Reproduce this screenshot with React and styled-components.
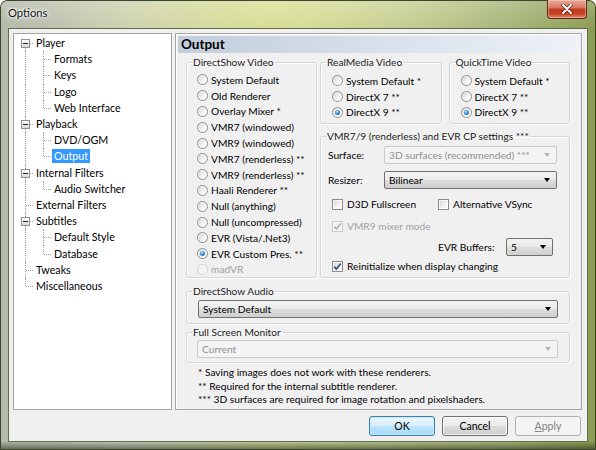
import React from 'react';
import styled, { createGlobalStyle, css } from 'styled-components';

const GlobalStyle = createGlobalStyle`
  html, body { margin: 0; padding: 0; background: #fff; }
  body {
    font-family: "Segoe UI", Lato, "Noto Sans", sans-serif;
    font-size: 10.2px;
    color: #000;
  }
  * { box-sizing: border-box; }
`;

const Window = styled.div`
  width: 596px;
  height: 450px;
  display: flex;
  flex-direction: column;
  padding: 0 8px 8px 8px;
  border-radius: 7px 7px 0 0;
  box-shadow: inset 0 0 0 1px #3b4630;
  background:
    linear-gradient(180deg, rgba(255,255,255,0.2) 0px, rgba(255,255,255,0) 28px, rgba(0,0,0,0) 441px, rgba(30,40,15,0.6) 450px),
    radial-gradient(ellipse 230px 70px at 270px 10px, rgba(222,228,150,0.85), rgba(222,228,150,0)),
    linear-gradient(90deg, #b4baa8 0%, #c6cbbb 22%, #c8cf98 45%, #bac591 65%, #a8b67a 85%, #8c9b52 100%);
`;

const TitleBar = styled.div`
  height: 28px;
  display: flex;
  align-items: flex-start;
`;

const Title = styled.span`
  margin-top: 5px;
  font-size: 11.2px;
  line-height: 16px;
  color: #111;
  text-shadow: 0 0 6px #fff, 0 0 3px #fff, 0 0 2px #fff;
`;

const CloseButton = styled.div`
  margin-left: auto;
  margin-right: 1px;
  width: 40px;
  height: 19px;
  display: flex;
  align-items: center;
  justify-content: center;
  border: 1px solid #5a2a1e;
  border-top: none;
  border-radius: 0 0 4px 4px;
  background: linear-gradient(180deg, #e9a998 0%, #d67a62 42%, #c23b1e 52%, #c94628 78%, #e0876a 100%);
  box-shadow: inset 0 0 0 1px rgba(255,220,200,0.45);
`;

const Client = styled.div`
  flex: 1;
  display: flex;
  flex-direction: column;
  gap: 6px;
  padding: 4px 5px 5px 4px;
  background: #f0f0f0;
  border: 1px solid #616e4c;
`;

const Main = styled.div`
  height: 377px;
  display: flex;
  gap: 3px;
`;

const Tree = styled.div`
  width: 159px;
  flex: none;
  background: #fff;
  border: 1px solid #a4a4a4;
  padding: 1px 0 0 2px;
  font-size: 10.7px;
`;

const TreeRow = styled.div`
  height: 16.2px;
  display: flex;
  align-items: center;
  white-space: nowrap;
`;

const Indent = styled.span`
  position: relative;
  width: 18px;
  height: 100%;
  flex: none;
  &::before {
    content: '';
    display: ${(p) => (p.$v ? 'block' : 'none')};
    position: absolute;
    left: 9px;
    top: ${(p) => (p.$first ? '50%' : '0')};
    bottom: ${(p) => (p.$last ? '50%' : '0')};
    border-left: 1px dotted #a0a0a0;
  }
  &::after {
    content: '';
    display: ${(p) => (p.$h ? 'block' : 'none')};
    position: absolute;
    left: 10px;
    right: 1px;
    top: 50%;
    border-top: 1px dotted #a0a0a0;
  }
`;

const Expander = styled.span`
  position: absolute;
  left: 5px;
  top: calc(50% - 4px);
  width: 9px;
  height: 9px;
  z-index: 1;
  border: 1px solid #919191;
  background: linear-gradient(180deg, #ffffff, #d9d9d9);
  display: flex;
  align-items: center;
  justify-content: center;
  &::after {
    content: '';
    width: 5px;
    height: 1px;
    background: #222;
  }
`;

const TreeLabel = styled.span`
  padding: 0 2px;
  line-height: 14px;
  ${(p) =>
    p.$selected &&
    css`
      background: #3399ff;
      color: #fff;
    `}
`;

const Panel = styled.div`
  flex: 1;
  display: flex;
  flex-direction: column;
  padding: 2px;
  border: 1px solid #a6a6a6;
  box-shadow: inset 1px 1px 0 #fff;
`;

const Header = styled.div`
  height: 17px;
  padding-left: 3px;
  line-height: 17px;
  font-size: 13.5px;
  font-weight: bold;
  background: linear-gradient(90deg, #c2cddc 0%, #d6dee9 45%, #eef2f7 100%);
`;

const Content = styled.div`
  display: flex;
  flex-direction: column;
  padding: 2px 9px 0 8px;
`;

const TopRow = styled.div`
  display: flex;
  gap: 3px;
`;

const RightCol = styled.div`
  width: 250px;
  display: flex;
  flex-direction: column;
  gap: 5px;
`;

const Pair = styled.div`
  display: flex;
  gap: 7px;
`;

const Group = styled.fieldset`
  margin: ${(p) => p.$mt || 0}px 0 0 0;
  padding: 0;
  min-width: 0;
  flex: ${(p) => p.$flex || 'none'};
  width: ${(p) => (p.$width ? `${p.$width}px` : 'auto')};
  border: 1px solid #d5d5d5;
  border-radius: 3px;
  box-shadow: inset 1px 1px 0 #fff, 1px 1px 0 #fff;
  display: flex;
  flex-direction: column;
`;

const Legend = styled.legend`
  margin-left: 5px;
  padding: 0 1px;
  line-height: 14px;
  white-space: nowrap;
  color: #1b1b1b;
`;

const GroupBody = styled.div`
  flex: 1;
  display: flex;
  flex-direction: column;
  padding: ${(p) => p.$pad || '3px 4px 0 10px'};
`;

const OptionRow = styled.label`
  height: ${(p) => p.$h || 15.8}px;
  width: ${(p) => (p.$w ? `${p.$w}px` : 'auto')};
  flex: none;
  display: flex;
  align-items: center;
  gap: ${(p) => p.$gap || 3}px;
  margin-left: ${(p) => p.$indent || 0}px;
  margin-top: ${(p) => p.$mt || 0}px;
  white-space: nowrap;
  color: ${(p) => (p.$disabled ? '#a0a0a0' : '#000')};
`;

const Radio = styled.span`
  width: 11px;
  height: 11px;
  flex: none;
  border-radius: 50%;
  display: grid;
  place-items: center;
  border: 1px solid ${(p) => (p.$disabled ? '#cfcfcf' : '#8c8c8c')};
  background: ${(p) =>
    p.$disabled
      ? 'linear-gradient(135deg, #ececec, #fafafa)'
      : 'linear-gradient(135deg, #cfcfcf, #f4f4f4 60%, #ffffff)'};
  box-shadow: inset 0 0 0 1px rgba(255,255,255,0.6);
  &::after {
    content: '';
    display: ${(p) => (p.$checked ? 'block' : 'none')};
    width: 5px;
    height: 5px;
    border-radius: 50%;
    background: radial-gradient(circle at 40% 35%, #b9e6fb 0, #3b8fd1 45%, #103f7a 100%);
  }
`;

const Box = styled.span`
  width: 11px;
  height: 11px;
  flex: none;
  display: grid;
  place-items: center;
  border: 1px solid ${(p) => (p.$disabled ? '#c9c9c9' : '#8c8c8c')};
  background: ${(p) =>
    p.$disabled ? '#f4f4f4' : 'linear-gradient(135deg, #d2d2d2, #f3f3f3 60%, #ffffff)'};
  box-shadow: inset 0 0 0 1px rgba(255,255,255,0.7);
`;

const FieldRow = styled.div`
  display: flex;
  align-items: center;
  margin-top: ${(p) => p.$mt || 0}px;
  padding-left: ${(p) => p.$pl || 0}px;
`;

const FieldLabel = styled.span`
  width: ${(p) => p.$w}px;
  flex: none;
  white-space: nowrap;
`;

const Combo = styled.div`
  height: 18px;
  flex: ${(p) => (p.$width ? 'none' : '1 1 auto')};
  width: ${(p) => (p.$width ? `${p.$width}px` : 'auto')};
  display: flex;
  align-items: center;
  padding-left: 4px;
  border-radius: 2px;
  white-space: nowrap;
  ${(p) =>
    p.$disabled
      ? css`
          border: 1px solid #c9c9c9;
          background: #f4f4f4;
          color: #8f8f8f;
        `
      : css`
          border: 1px solid #707070;
          background: linear-gradient(180deg, #f2f2f2 0%, #ebebeb 50%, #dddddd 50%, #cfcfcf 100%);
          color: #000;
        `}
  &::after {
    content: '';
    margin-left: auto;
    margin-right: 6px;
    border-left: 3.5px solid transparent;
    border-right: 3.5px solid transparent;
    border-top: 4px solid ${(p) => (p.$disabled ? '#b5b5b5' : '#000')};
  }
`;

const Notes = styled.div`
  margin-top: 3px;
  padding-left: 12px;
  line-height: 13.5px;
`;

const Buttons = styled.div`
  display: flex;
  justify-content: flex-end;
  gap: 7px;
  padding-right: 1px;
`;

const Button = styled.button`
  width: 66px;
  height: 20px;
  padding: 0;
  font: inherit;
  font-size: 10.5px;
  border-radius: 3px;
  ${(p) =>
    p.$variant === 'default'
      ? css`
          border: 1px solid #3c7fb1;
          background: linear-gradient(180deg, #eaf6fd 0%, #d9f0fc 50%, #bee6fd 50%, #a7d9f5 100%);
          box-shadow: inset 0 0 0 1px #c5e8fb;
          color: #000;
        `
      : p.$variant === 'disabled'
      ? css`
          border: 1px solid #adb2b5;
          background: #f4f4f4;
          color: #838383;
        `
      : css`
          border: 1px solid #707070;
          background: linear-gradient(180deg, #f2f2f2 0%, #ebebeb 50%, #dddddd 50%, #cfcfcf 100%);
          box-shadow: inset 0 0 0 1px rgba(255,255,255,0.7);
          color: #000;
        `}
`;

const Check = ({ color }) => (
  <svg width="9" height="9" viewBox="0 0 9 9">
    <path d="M1.2 4.6 L3.4 7 L7.8 1.6" fill="none" stroke={color} strokeWidth="1.6" />
  </svg>
);

const tree = [
  { label: 'Player', children: ['Formats', 'Keys', 'Logo', 'Web Interface'] },
  { label: 'Playback', children: ['DVD/OGM', 'Output'] },
  { label: 'Internal Filters', children: ['Audio Switcher'] },
  { label: 'External Filters' },
  { label: 'Subtitles', children: ['Default Style', 'Database'] },
  { label: 'Tweaks' },
  { label: 'Miscellaneous' },
];

const dsVideo = [
  'System Default',
  'Old Renderer',
  'Overlay Mixer *',
  'VMR7 (windowed)',
  'VMR9 (windowed)',
  'VMR7 (renderless) **',
  'VMR9 (renderless) **',
  'Haali Renderer **',
  'Null (anything)',
  'Null (uncompressed)',
  'EVR (Vista/.Net3)',
  'EVR Custom Pres. **',
  'madVR',
];

function RadioOption({ label, checked, disabled }) {
  return (
    <OptionRow $disabled={disabled}>
      <Radio $checked={checked} $disabled={disabled} />
      {label}
    </OptionRow>
  );
}

function CheckOption({ label, checked, disabled, indent, mt, width }) {
  return (
    <OptionRow $disabled={disabled} $indent={indent} $mt={mt} $w={width} $h={16} $gap={4}>
      <Box $disabled={disabled}>{checked && <Check color={disabled ? '#b0b0b0' : '#2b4a86'} />}</Box>
      {label}
    </OptionRow>
  );
}

function GroupBox({ title, pad, children, ...rest }) {
  return (
    <Group {...rest}>
      <Legend>{title}</Legend>
      <GroupBody $pad={pad}>{children}</GroupBody>
    </Group>
  );
}

function OptionsTree() {
  const rows = [];
  tree.forEach((node, i) => {
    const first = i === 0;
    const last = i === tree.length - 1;
    rows.push(
      <TreeRow key={node.label}>
        <Indent $v $h $first={first} $last={last}>
          {node.children && <Expander />}
        </Indent>
        <TreeLabel>{node.label}</TreeLabel>
      </TreeRow>
    );
    (node.children || []).forEach((child, j) => {
      rows.push(
        <TreeRow key={child}>
          <Indent $v={!last} />
          <Indent $v $h $last={j === node.children.length - 1} />
          <TreeLabel $selected={child === 'Output'}>{child}</TreeLabel>
        </TreeRow>
      );
    });
  });
  return <Tree>{rows}</Tree>;
}

export default function App() {
  return (
    <>
      <GlobalStyle />
      <Window>
        <TitleBar>
          <Title>Options</Title>
          <CloseButton>
            <svg width="12" height="10" viewBox="0 0 12 10">
              <path d="M2 1 L10 9 M10 1 L2 9" stroke="#5a1d10" strokeWidth="3.4" strokeLinecap="round" />
              <path d="M2 1 L10 9 M10 1 L2 9" stroke="#fff" strokeWidth="2" strokeLinecap="round" />
            </svg>
          </CloseButton>
        </TitleBar>
        <Client>
          <Main>
            <OptionsTree />
            <Panel>
              <Header>Output</Header>
              <Content>
                <TopRow>
                  <GroupBox title="DirectShow Video" $width={131} pad="3px 4px 0 10px">
                    {dsVideo.map((v) => (
                      <RadioOption
                        key={v}
                        label={v}
                        checked={v === 'EVR Custom Pres. **'}
                        disabled={v === 'madVR'}
                      />
                    ))}
                  </GroupBox>
                  <RightCol>
                    <Pair>
                      <GroupBox title="RealMedia Video" $flex={1} pad="4px 4px 3px 11px">
                        <RadioOption label="System Default *" />
                        <RadioOption label="DirectX 7 **" />
                        <RadioOption label="DirectX 9 **" checked />
                      </GroupBox>
                      <GroupBox title="QuickTime Video" $flex={1} pad="4px 4px 3px 11px">
                        <RadioOption label="System Default *" />
                        <RadioOption label="DirectX 7 **" />
                        <RadioOption label="DirectX 9 **" checked />
                      </GroupBox>
                    </Pair>
                    <GroupBox
                      title="VMR7/9 (renderless) and EVR CP settings ***"
                      $flex={1}
                      pad="3px 12px 0 7px"
                    >
                      <FieldRow>
                        <FieldLabel $w={56}>Surface:</FieldLabel>
                        <Combo $disabled>3D surfaces (recommended) ***</Combo>
                      </FieldRow>
                      <FieldRow $mt={7}>
                        <FieldLabel $w={56}>Resizer:</FieldLabel>
                        <Combo>Bilinear</Combo>
                      </FieldRow>
                      <FieldRow $mt={7}>
                        <CheckOption label="D3D Fullscreen" indent={4} width={106} />
                        <CheckOption label="Alternative VSync" />
                      </FieldRow>
                      <CheckOption label="VMR9 mixer mode" checked disabled indent={4} mt={6} />
                      <FieldRow $mt={4} $pl={110}>
                        <FieldLabel $w={68}>EVR Buffers:</FieldLabel>
                        <Combo $width={47}>5</Combo>
                      </FieldRow>
                      <CheckOption label="Reinitialize when display changing" checked indent={4} mt={2} />
                    </GroupBox>
                  </RightCol>
                </TopRow>
                <GroupBox title="DirectShow Audio" $mt={6} pad="2px 11px 5px 11px">
                  <Combo>System Default</Combo>
                </GroupBox>
                <GroupBox title="Full Screen Monitor" $mt={1} pad="1px 11px 4px 10px">
                  <Combo $disabled>Current</Combo>
                </GroupBox>
                <Notes>
                  <div>* Saving images does not work with these renderers.</div>
                  <div>** Required for the internal subtitle renderer.</div>
                  <div>*** 3D surfaces are required for image rotation and pixelshaders.</div>
                </Notes>
              </Content>
            </Panel>
          </Main>
          <Buttons>
            <Button $variant="default">OK</Button>
            <Button>Cancel</Button>
            <Button $variant="disabled">
              <u>A</u>pply
            </Button>
          </Buttons>
        </Client>
      </Window>
    </>
  );
}
